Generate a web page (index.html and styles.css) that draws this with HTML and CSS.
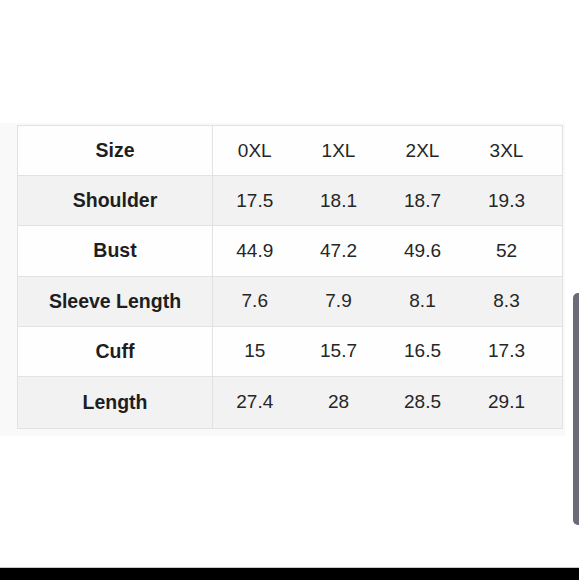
FILE: index.html
```html
<!DOCTYPE html>
<html>
<head>
<meta charset="utf-8">
<link rel="stylesheet" href="styles.css">
</head>
<body>
<div class="page">
  <div class="panel">
    <table class="sizes">
      <colgroup>
        <col class="c-label"><col class="c-val"><col class="c-val"><col class="c-val"><col class="c-val"><col class="c-pad">
      </colgroup>
      <tr class="light"><th>Size</th><td>0XL</td><td>1XL</td><td>2XL</td><td>3XL</td><td></td></tr>
      <tr class="dark"><th>Shoulder</th><td>17.5</td><td>18.1</td><td>18.7</td><td>19.3</td><td></td></tr>
      <tr class="light"><th>Bust</th><td>44.9</td><td>47.2</td><td>49.6</td><td>52</td><td></td></tr>
      <tr class="dark"><th>Sleeve Length</th><td>7.6</td><td>7.9</td><td>8.1</td><td>8.3</td><td></td></tr>
      <tr class="light"><th>Cuff</th><td>15</td><td>15.7</td><td>16.5</td><td>17.3</td><td></td></tr>
      <tr class="dark last"><th>Length</th><td>27.4</td><td>28</td><td>28.5</td><td>29.1</td><td></td></tr>
    </table>
  </div>
  <div class="fill"></div>
  <div class="bottombar"></div>
  <div class="scrollthumb"></div>
</div>
</body>
</html>
```
FILE: styles.css
```css
html, body {
  margin: 0;
  padding: 0;
  background: #ffffff;
}
.page {
  position: relative;
  width: 579px;
  height: 580px;
  display: flex;
  flex-direction: column;
  overflow: hidden;
  font-family: "Liberation Sans", Arial, sans-serif;
  color: #1e1e1e;
}
.panel {
  margin-top: 123px;
  width: 565px;
  box-sizing: border-box;
  padding: 2px 0 7px 17px;
  background: #f9f9f9;
}
.sizes {
  border-collapse: collapse;
  table-layout: fixed;
  width: 545px;
}
.c-label { width: 195px; }
.c-val { width: 84px; }
.c-pad { width: 14px; }
.sizes tr { height: 50.2px; }
.sizes tr.last { height: 52px; }
.sizes th, .sizes td {
  padding: 0;
  text-align: center;
  vertical-align: middle;
  border-top: 1px solid #e2e2e2;
  border-bottom: 1px solid #e2e2e2;
}
.sizes th {
  font-size: 19.5px;
  font-weight: bold;
  border-left: 1px solid #e2e2e2;
  border-right: 1px solid #e2e2e2;
}
.sizes td {
  font-size: 19px;
  font-weight: normal;
  color: #262626;
}
.sizes td:last-child {
  border-right: 1px solid #e2e2e2;
}
.light { background: #fefefe; }
.dark { background: #f2f2f2; }
.fill { flex: 1; }
.bottombar {
  height: 12px;
  background: #000;
  border-top: 1px solid #c8c8c8;
}
.scrollthumb {
  position: absolute;
  right: 0;
  top: 293px;
  width: 6px;
  height: 232px;
  background: #6c6b79;
  border-radius: 5px 0 0 5px;
}
```
